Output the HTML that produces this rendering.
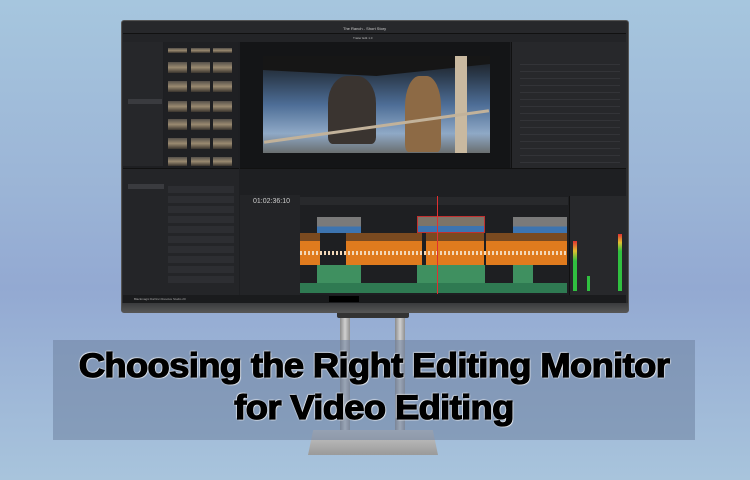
<!DOCTYPE html>
<html><head><meta charset="utf-8"><style>
*{margin:0;padding:0;box-sizing:border-box}
body{width:750px;height:480px;overflow:hidden;position:relative;background:linear-gradient(180deg,#a6c6de 0%,#9bb4d6 40%,#93a9d2 60%,#a8c4dc 100%);font-family:"Liberation Sans",sans-serif}
.a{position:absolute}
.t{font-size:3px;color:#888;white-space:nowrap}
.th{position:absolute;width:19px;height:11px;background:linear-gradient(180deg,#55504a,#9a8a70 50%,#3a342e)}
</style></head><body>
<!-- stand -->
<div class="a" style="left:340px;top:312px;width:10px;height:125px;background:linear-gradient(90deg,#8a8a8a,#d0d0d0,#909090)"></div>
<div class="a" style="left:395px;top:312px;width:10px;height:125px;background:linear-gradient(90deg,#8a8a8a,#d0d0d0,#909090)"></div>
<div class="a" style="left:337px;top:312px;width:72px;height:6px;background:#333;border-radius:0 0 2px 2px"></div>
<div class="a" style="left:308px;top:430px;width:130px;height:25px;background:linear-gradient(180deg,#c8c8c8,#9a9a9a);clip-path:polygon(4% 0,96% 0,100% 100%,0 100%)"></div>
<!-- monitor -->
<div class="a" style="left:121px;top:20px;width:508px;height:293px;background:#2a2b2d;border-radius:3px;border:1px solid #555"></div>
<div class="a" style="left:122px;top:303px;width:506px;height:9px;background:linear-gradient(#3a3b3d,#555)"></div>
<div class="a" style="left:123px;top:22px;width:503px;height:281px;background:#1e1f22"></div>
<div class="a" style="left:123px;top:22px;width:503px;height:12px;background:#27282b;border-bottom:1px solid #111"></div>
<div class="a t" style="left:343px;top:26px;color:#ccc;font-size:4px">The Ranch - Short Story</div>
<div class="a" style="left:123px;top:34px;width:503px;height:8px;background:#232427"></div>
<div class="a t" style="left:353px;top:36px;color:#bbb">Trailer Edit 1.0</div>
<div class="a" style="left:123px;top:42px;width:40px;height:124px;background:#26272a"></div>
<div class="a" style="left:128px;top:99px;width:34px;height:5px;background:#3a3b3f"></div>
<div class="a" style="left:164px;top:42px;width:74px;height:124px;background:#1f2023"></div>
<div class="th" style="left:168px;top:48px;height:5px"></div><div class="th" style="left:191px;top:48px;height:5px"></div><div class="th" style="left:213px;top:48px;height:5px"></div>
<div class="th" style="left:168px;top:62px"></div><div class="th" style="left:191px;top:62px"></div><div class="th" style="left:213px;top:62px"></div>
<div class="th" style="left:168px;top:81px"></div><div class="th" style="left:191px;top:81px"></div><div class="th" style="left:213px;top:81px"></div>
<div class="th" style="left:168px;top:101px"></div><div class="th" style="left:191px;top:101px"></div><div class="th" style="left:213px;top:101px"></div>
<div class="th" style="left:168px;top:119px"></div><div class="th" style="left:191px;top:119px"></div><div class="th" style="left:213px;top:119px"></div>
<div class="th" style="left:168px;top:138px"></div><div class="th" style="left:191px;top:138px"></div><div class="th" style="left:213px;top:138px"></div>
<div class="th" style="left:168px;top:157px;height:9px"></div><div class="th" style="left:191px;top:157px;height:9px"></div><div class="th" style="left:213px;top:157px;height:9px"></div>
<!-- viewer -->
<div class="a" style="left:240px;top:42px;width:270px;height:126px;background:#141517"></div>
<div class="a" style="left:263px;top:56px;width:227px;height:97px;background:linear-gradient(180deg,#1a1a1c 0%,#2b3a4c 20%,#4d6d96 50%,#8fa9c6 80%,#6a6e70 100%)"></div>
<div class="a" style="left:263px;top:56px;width:227px;height:20px;background:#161616;clip-path:polygon(0 0,100% 0,100% 40%,50% 100%,0 70%)"></div>
<div class="a" style="left:328px;top:76px;width:48px;height:68px;background:#3a3430;border-radius:40% 40% 10% 10%"></div>
<div class="a" style="left:405px;top:76px;width:36px;height:76px;background:#8d6a45;border-radius:40% 40% 10% 10%"></div>
<div class="a" style="left:455px;top:56px;width:12px;height:97px;background:#c9b9a0"></div>
<div class="a" style="left:263px;top:125px;width:227px;height:3px;background:#c2b29a;transform:rotate(-8deg)"></div>
<!-- inspector -->
<div class="a" style="left:511px;top:42px;width:115px;height:140px;background:#27282b;border-left:1px solid #111"></div>
<div class="a" style="left:520px;top:58px;width:100px;height:120px;background:repeating-linear-gradient(180deg,transparent 0,transparent 6px,#333438 6px,#333438 7px)"></div>
<!-- effects -->
<div class="a" style="left:123px;top:168px;width:116px;height:127px;background:#242528;border-top:1px solid #111"></div>
<div class="a" style="left:128px;top:184px;width:36px;height:5px;background:#3a3b3f"></div>
<div class="a" style="left:168px;top:186px;width:66px;height:100px;background:repeating-linear-gradient(180deg,#2d2e32 0,#2d2e32 7px,transparent 7px,transparent 10px)"></div>
<!-- timeline -->
<div class="a" style="left:240px;top:168px;width:386px;height:127px;background:#1e1f22;border-top:1px solid #111"></div>
<div class="a" style="left:240px;top:195px;width:60px;height:100px;background:#232427"></div>
<div class="a" style="left:253px;top:198px;font-size:7px;color:#ccc">01:02:36:10</div>
<div class="a" style="left:300px;top:197px;width:268px;height:8px;background:#28292c"></div>
<div class="a" style="left:317px;top:217px;width:44px;height:16px;background:linear-gradient(#7a7a7a 0,#7a7a7a 60%,#3d74b0 60%)"></div>
<div class="a" style="left:417px;top:216px;width:68px;height:17px;background:linear-gradient(#7d7468 0,#7d7468 60%,#3d74b0 60%);border:1px solid #c03030"></div>
<div class="a" style="left:513px;top:217px;width:54px;height:16px;background:linear-gradient(#7a7a7a 0,#7a7a7a 60%,#3d74b0 60%)"></div>
<div class="a" style="left:300px;top:233px;width:20px;height:32px;background:linear-gradient(#7a4a20 0,#7a4a20 25%,#e07b1e 25%)"></div>
<div class="a" style="left:346px;top:233px;width:76px;height:32px;background:linear-gradient(#7a4a20 0,#7a4a20 25%,#e07b1e 25%)"></div>
<div class="a" style="left:426px;top:233px;width:58px;height:32px;background:linear-gradient(#7a4a20 0,#7a4a20 25%,#e07b1e 25%)"></div>
<div class="a" style="left:486px;top:233px;width:81px;height:32px;background:linear-gradient(#7a4a20 0,#7a4a20 25%,#e07b1e 25%)"></div>
<div class="a" style="left:300px;top:251px;width:267px;height:4px;background:repeating-linear-gradient(90deg,#f3d8b8 0,#f3d8b8 2px,transparent 2px,transparent 4px)"></div>
<div class="a" style="left:317px;top:265px;width:44px;height:18px;background:#3f9060"></div>
<div class="a" style="left:417px;top:265px;width:68px;height:18px;background:#3f9060"></div>
<div class="a" style="left:513px;top:265px;width:20px;height:18px;background:#3f9060"></div>
<div class="a" style="left:300px;top:283px;width:267px;height:10px;background:#2f7a52"></div>
<div class="a" style="left:437px;top:196px;width:1px;height:98px;background:#e03030"></div>
<!-- mixer -->
<div class="a" style="left:569px;top:196px;width:57px;height:99px;background:#27282b;border-left:1px solid #111"></div>
<div class="a" style="left:573px;top:241px;width:4px;height:50px;background:linear-gradient(#e03030,#e0c030 20%,#30c040 40%)"></div>
<div class="a" style="left:587px;top:276px;width:3px;height:15px;background:#30c040"></div>
<div class="a" style="left:618px;top:234px;width:4px;height:57px;background:linear-gradient(#e03030,#e0c030 15%,#30c040 30%)"></div>
<div class="a" style="left:123px;top:295px;width:503px;height:8px;background:#1a1b1d"></div>
<div class="a" style="left:329px;top:296px;width:30px;height:6px;background:#000"></div>
<div class="a t" style="left:134px;top:297px;color:#aaa">Blackmagic DaVinci Resolve Studio 20</div>
<!-- banner -->
<div class="a" style="left:53px;top:340px;width:642px;height:100px;background:rgba(110,130,160,0.55)"></div>
<div class="a" style="left:53px;top:345px;width:642px;text-align:center;font-weight:bold;font-size:34px;line-height:42px;color:#000;letter-spacing:-0.6px;-webkit-text-stroke:1.3px #000;text-shadow:0 0 2px #fff,0 0 2px #fff,1px 1px 1px #fff,-1px -1px 1px #fff;transform:scaleX(1.07)">Choosing the Right Editing Monitor<br>for Video Editing</div>
</body></html>
